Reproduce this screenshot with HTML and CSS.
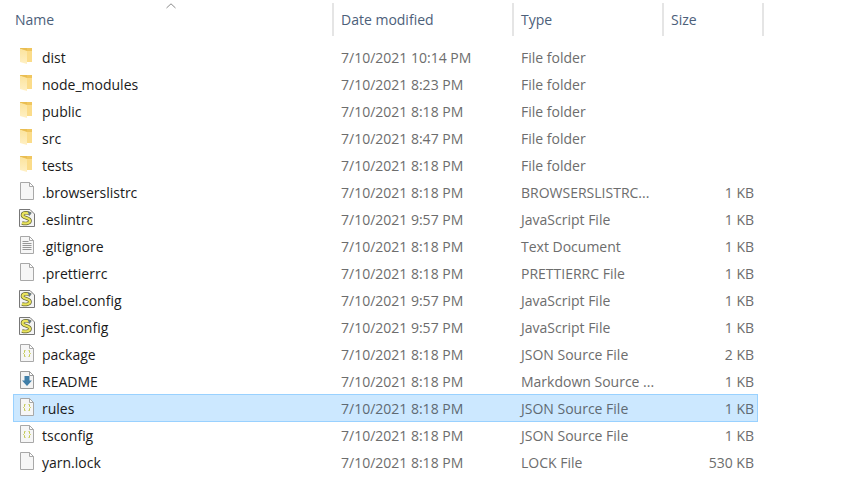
FILE: index.html
```html
<!DOCTYPE html>
<html lang="en">
<head>
    <meta charset="UTF-8">
    <title>File list</title>
    <link rel="stylesheet" href="styles.css">
</head>
<body>
    <svg class="defs" width="0" height="0">
        <defs>
            <linearGradient id="g-front" x1="0" y1="0" x2="0" y2="1">
                <stop offset="0" stop-color="#fbe39c"/>
                <stop offset="1" stop-color="#fff0c4"/>
            </linearGradient>
        </defs>
        <symbol id="i-folder" viewBox="0 0 16 18">
            <path d="M1 1h12v14H1z" fill="#f0c65f"/>
            <path d="M8 4h5v11H8z" fill="#fbdc8a"/>
            <path d="M1 1.500l7 2.500V17L1 15z" fill="url(#g-front)"/>
            <path d="M1 1h7v2.400L1 1.500z" fill="#e9bd52"/>
        </symbol>
        <symbol id="i-blank" viewBox="0 0 16 18">
            <path d="M1.500 .5h9l4 4v13h-13z" fill="#f6f6f6" stroke="#a8a8a8"/>
            <path d="M10.500 .5v4h4z" fill="#fff" stroke="#a8a8a8"/>
        </symbol>
        <symbol id="i-text" viewBox="0 0 16 18">
            <use href="#i-blank"/>
            <path d="M3.500 5.500h6M3.500 7.500h9M3.500 9.500h9M3.500 11.500h9M3.500 13.500h9" stroke="#979797"/>
        </symbol>
        <symbol id="i-script" viewBox="0 0 16 18">
            <path d="M.5 .5h10.500l4.500 4.500v12.500h-15z" fill="#f4f4f4" stroke="#777"/>
            <path d="M11.500 5.200c-3-2.200-8-1.800-8 1 0 3 7.500 2.200 7.500 5.500 0 2.600-4.500 3.300-8 2.300" fill="none" stroke="#5f5f30" stroke-width="3.600"/>
            <path d="M11.500 5.200c-3-2.200-8-1.800-8 1 0 3 7.500 2.200 7.500 5.500 0 2.600-4.500 3.300-8 2.300" fill="none" stroke="#e9e35c" stroke-width="2.200"/>
            <path d="M8.500 2.500l4 1.500-2 2.500z" fill="#5f7396"/>
        </symbol>
        <symbol id="i-json" viewBox="0 0 16 18">
            <use href="#i-blank"/>
            <path d="M6.500 6.500h-1v2l-1 1 1 1v2h1M9.500 6.500h1v2l1 1-1 1v2h-1" fill="none" stroke="#c3c850"/>
        </symbol>
        <symbol id="i-md" viewBox="0 0 16 18">
            <path d="M1.500 .5h9l4 4v13h-13z" fill="#f3f3f3" stroke="#9a9a9a"/>
            <path d="M10.500 .5v4h4z" fill="#fff" stroke="#9a9a9a"/>
            <path d="M5.500 5h5v4.500H13L8 15 3 9.500h2.500z" fill="#3f7ea8"/>
        </symbol>
    </svg>

    <div class="list">
        <div class="head">
            <div class="col first">Name<svg class="caret" width="10" height="6"><path d="M.5 5L5 .8 9.500 5" fill="none" stroke="#8b8b8b"/></svg></div>
            <div class="col">Date modified</div>
            <div class="col">Type</div>
            <div class="col">Size</div>
        </div>

        <div class="row"><div class="name"><svg class="ic"><use href="#i-folder"/></svg>dist</div><div>7/10/2021 10:14 PM</div><div>File folder</div><div class="size"></div></div>
        <div class="row"><div class="name"><svg class="ic"><use href="#i-folder"/></svg>node_modules</div><div>7/10/2021 8:23 PM</div><div>File folder</div><div class="size"></div></div>
        <div class="row"><div class="name"><svg class="ic"><use href="#i-folder"/></svg>public</div><div>7/10/2021 8:18 PM</div><div>File folder</div><div class="size"></div></div>
        <div class="row"><div class="name"><svg class="ic"><use href="#i-folder"/></svg>src</div><div>7/10/2021 8:47 PM</div><div>File folder</div><div class="size"></div></div>
        <div class="row"><div class="name"><svg class="ic"><use href="#i-folder"/></svg>tests</div><div>7/10/2021 8:18 PM</div><div>File folder</div><div class="size"></div></div>
        <div class="row"><div class="name"><svg class="ic"><use href="#i-blank"/></svg>.browserslistrc</div><div>7/10/2021 8:18 PM</div><div>BROWSERSLISTRC...</div><div class="size">1 KB</div></div>
        <div class="row"><div class="name"><svg class="ic"><use href="#i-script"/></svg>.eslintrc</div><div>7/10/2021 9:57 PM</div><div>JavaScript File</div><div class="size">1 KB</div></div>
        <div class="row"><div class="name"><svg class="ic"><use href="#i-text"/></svg>.gitignore</div><div>7/10/2021 8:18 PM</div><div>Text Document</div><div class="size">1 KB</div></div>
        <div class="row"><div class="name"><svg class="ic"><use href="#i-blank"/></svg>.prettierrc</div><div>7/10/2021 8:18 PM</div><div>PRETTIERRC File</div><div class="size">1 KB</div></div>
        <div class="row"><div class="name"><svg class="ic"><use href="#i-script"/></svg>babel.config</div><div>7/10/2021 9:57 PM</div><div>JavaScript File</div><div class="size">1 KB</div></div>
        <div class="row"><div class="name"><svg class="ic"><use href="#i-script"/></svg>jest.config</div><div>7/10/2021 9:57 PM</div><div>JavaScript File</div><div class="size">1 KB</div></div>
        <div class="row"><div class="name"><svg class="ic"><use href="#i-json"/></svg>package</div><div>7/10/2021 8:18 PM</div><div>JSON Source File</div><div class="size">2 KB</div></div>
        <div class="row"><div class="name"><svg class="ic"><use href="#i-md"/></svg>README</div><div>7/10/2021 8:18 PM</div><div>Markdown Source ...</div><div class="size">1 KB</div></div>
        <div class="row on"><div class="name"><svg class="ic"><use href="#i-json"/></svg>rules</div><div>7/10/2021 8:18 PM</div><div>JSON Source File</div><div class="size">1 KB</div></div>
        <div class="row"><div class="name"><svg class="ic"><use href="#i-json"/></svg>tsconfig</div><div>7/10/2021 8:18 PM</div><div>JSON Source File</div><div class="size">1 KB</div></div>
        <div class="row"><div class="name"><svg class="ic"><use href="#i-blank"/></svg>yarn.lock</div><div>7/10/2021 8:18 PM</div><div>LOCK File</div><div class="size">530 KB</div></div>
    </div>
</body>
</html>
```

FILE: styles.css
```css
* { margin: 0; padding: 0; box-sizing: border-box; }
body { background: #fff; font-family: "Open Sans", "Noto Sans", sans-serif; font-size: 14px; overflow: hidden; }
.defs { display: block; height: 0; }
.list { padding: 3px 0 0 13px; }
.head { display: grid; grid-template-columns: 321px 180px 150px 100px; height: 33px; margin-bottom: 8px; color: #4c607a; }
.col { position: relative; padding: 7px 0 0 7px; border-right: 2px solid #e5e5e5; }
.col.first { padding-left: 2px; }
.caret { position: absolute; left: 153px; top: 0; }
.row { display: grid; grid-template-columns: 321px 180px 150px 94px; width: 745px; height: 27px; line-height: 27px; color: #6d6d6d; }
.row > div { padding-left: 7px; white-space: nowrap; }
.row .name { display: flex; align-items: center; gap: 7px; padding-left: 6px; color: #1a1a1a; }
.row .size { padding: 0 4px 0 0; text-align: right; }
.ic { width: 16px; height: 18px; flex: none; margin-bottom: 3px; }
.row.on { background: #cce8ff; box-shadow: inset 0 0 0 1px #99d1ff; height: 28px; margin-top: -1px; color: #5f6a73; }
.row.on > div { padding-top: 1px; }
```
